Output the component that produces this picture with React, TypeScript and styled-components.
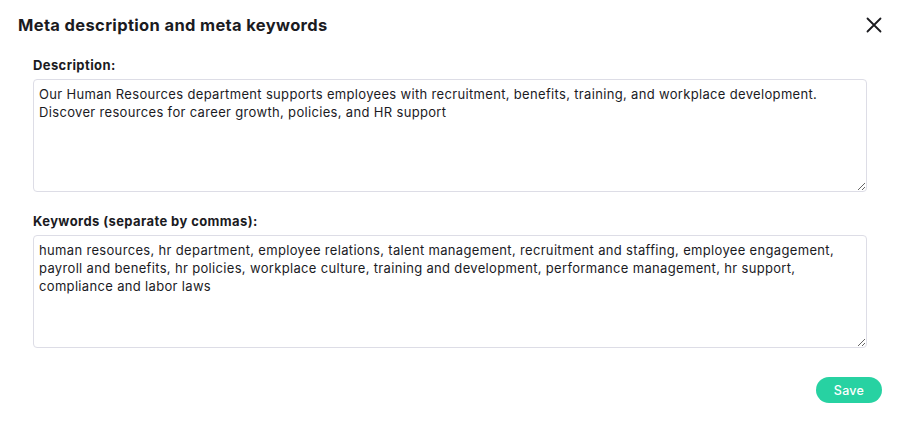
import React from 'react';
import styled, { createGlobalStyle } from 'styled-components';

const GlobalStyle = createGlobalStyle`
  html, body {
    margin: 0;
    padding: 0;
    background: #fff;
  }
  body {
    font-family: 'Inter', 'Open Sans', sans-serif;
    color: #1b1b1f;
  }
`;

const DESCRIPTION =
  'Our Human Resources department supports employees with recruitment, benefits, training, and workplace development. Discover resources for career growth, policies, and HR support';

const KEYWORDS =
  'human resources, hr department, employee relations, talent management, recruitment and staffing, employee engagement, payroll and benefits, hr policies, workplace culture, training and development, performance management, hr support, compliance and labor laws';

export default function App() {
  return (
    <>
      <GlobalStyle />
      <Modal>
        <Header>
          <Title>Meta description and meta keywords</Title>
          <CloseButton aria-label="close">
            <svg width="16" height="16" viewBox="0 0 16 16">
              <path d="M1.5 1.5 L14.5 14.5 M14.5 1.5 L1.5 14.5" stroke="#1b1b1f" strokeWidth="1.8" strokeLinecap="round" />
            </svg>
          </CloseButton>
        </Header>

        <Body>
          <Field>
            <Label>Description:</Label>
            <TextArea defaultValue={DESCRIPTION} />
          </Field>
          <Field>
            <Label>Keywords (separate by commas):</Label>
            <TextArea defaultValue={KEYWORDS} />
          </Field>
        </Body>

        <Footer>
          <SaveButton>Save</SaveButton>
        </Footer>
      </Modal>
    </>
  );
}

const Modal = styled.div`
  width: 900px;
  height: 423px;
  box-sizing: border-box;
  padding: 13px 18px 0 18px;
  display: flex;
  flex-direction: column;
`;

const Header = styled.div`
  display: flex;
  align-items: center;
  justify-content: space-between;
  height: 24px;
`;

const Title = styled.h2`
  margin: 0;
  font-size: 16.5px;
  font-weight: 700;
  letter-spacing: 0.35px;
`;

const CloseButton = styled.button`
  background: transparent;
  border: none;
  padding: 0;
  width: 16px;
  height: 16px;
  cursor: pointer;
  display: flex;
`;

const Body = styled.div`
  padding: 20px 15px 0 15px;
  display: flex;
  flex-direction: column;
  gap: 21px;
`;

const Field = styled.div`
  display: flex;
  flex-direction: column;
  gap: 6px;
`;

const Label = styled.label`
  font-size: 13px;
  font-weight: 700;
  line-height: 16px;
  letter-spacing: 0.4px;
`;

const TextArea = styled.textarea`
  box-sizing: border-box;
  width: 100%;
  height: 113px;
  border: 1px solid #dddde6;
  border-radius: 4px;
  padding: 5px 5px;
  font-family: 'Inter', 'Open Sans', sans-serif;
  font-size: 13px;
  line-height: 18px;
  letter-spacing: 0.33px;
  color: #1b1b1f;
  outline: none;
`;

const Footer = styled.div`
  display: flex;
  justify-content: flex-end;
  padding-top: 29px;
`;

const SaveButton = styled.button`
  background: #27d2a2;
  color: #fff;
  border: none;
  border-radius: 14px;
  width: 66px;
  height: 26px;
  font-family: 'Inter', 'Open Sans', sans-serif;
  font-size: 12.5px;
  font-weight: 500;
  letter-spacing: 0.3px;
  cursor: pointer;
`;
